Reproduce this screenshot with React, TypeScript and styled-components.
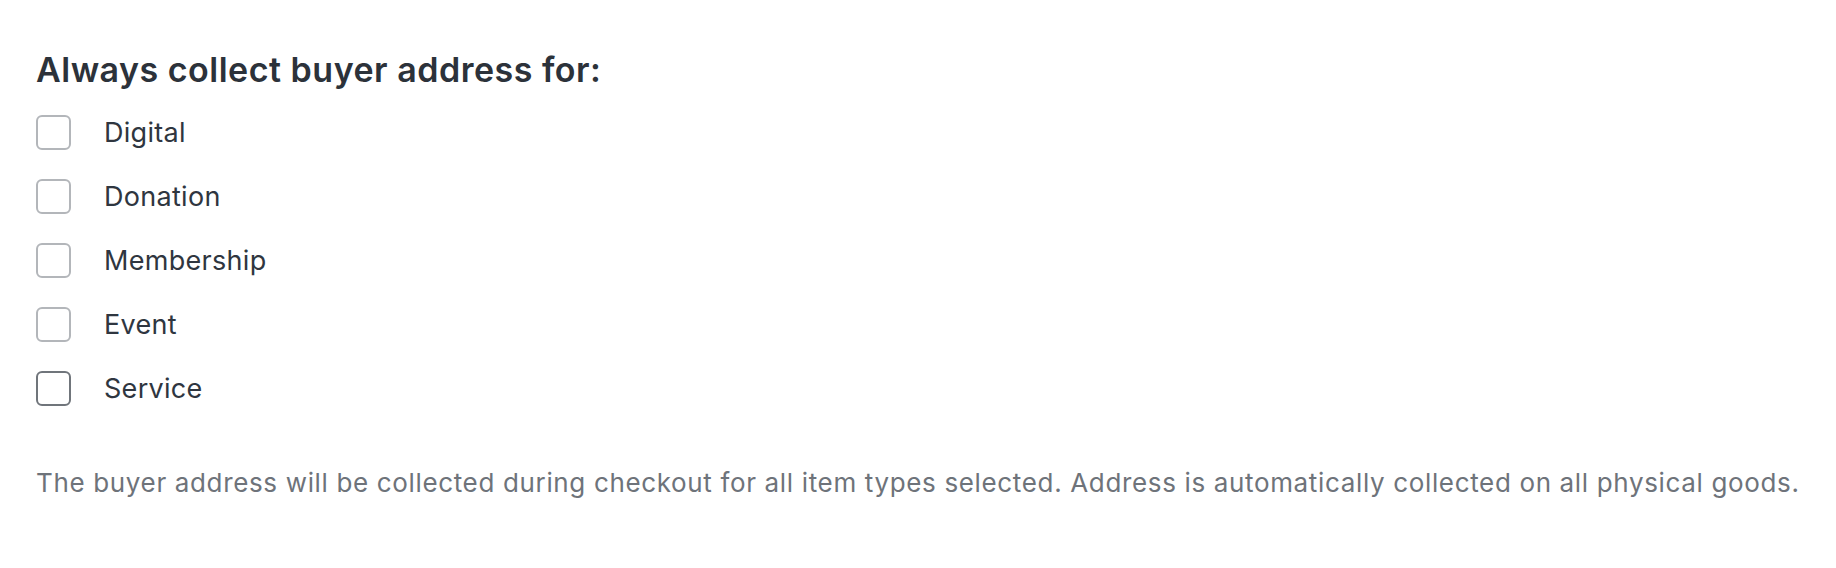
import styled, { createGlobalStyle } from "styled-components";

const GlobalStyle = createGlobalStyle`
  body {
    margin: 0;
    background: #ffffff;
    font-family: Inter, "Noto Sans", sans-serif;
  }
`;

const itemTypes = [
  { id: "digital", label: "Digital" },
  { id: "donation", label: "Donation" },
  { id: "membership", label: "Membership" },
  { id: "event", label: "Event" },
  { id: "service", label: "Service", focused: true },
];

function App() {
  return (
    <>
      <GlobalStyle />
      <Section>
        <Heading>Always collect buyer address for:</Heading>
        <OptionList>
          {itemTypes.map((item) => (
            <Option key={item.id}>
              <Box $focused={item.focused} />
              <Label>{item.label}</Label>
            </Option>
          ))}
        </OptionList>
        <HelpText>
          The buyer address will be collected during checkout for all item
          types selected. Address is automatically collected on all physical
          goods.
        </HelpText>
      </Section>
    </>
  );
}

export default App;

const Section = styled.section`
  display: flex;
  flex-direction: column;
  padding: 48px 36px;
`;

const Heading = styled.h2`
  margin: 0;
  font-size: 34px;
  line-height: 44px;
  font-weight: 600;
  letter-spacing: 0.5px;
  color: #2c323a;
`;

const OptionList = styled.div`
  display: flex;
  flex-direction: column;
  gap: 29px;
  margin-top: 23px;
`;

const Option = styled.label`
  display: flex;
  align-items: center;
  gap: 33px;
  cursor: pointer;
`;

const Box = styled.span<{ $focused?: boolean }>`
  box-sizing: border-box;
  width: 35px;
  height: 35px;
  border-radius: 6px;
  border: 2px solid ${(p) => (p.$focused ? "#70757b" : "#b3b6ba")};
  background: #ffffff;
`;

const Label = styled.span`
  font-size: 27px;
  line-height: 35px;
  letter-spacing: 0.3px;
  color: #2f3640;
`;

const HelpText = styled.p`
  margin: 60px 0 0;
  font-size: 26px;
  line-height: 34px;
  letter-spacing: 0.65px;
  color: #6e737a;
  white-space: nowrap;
`;
